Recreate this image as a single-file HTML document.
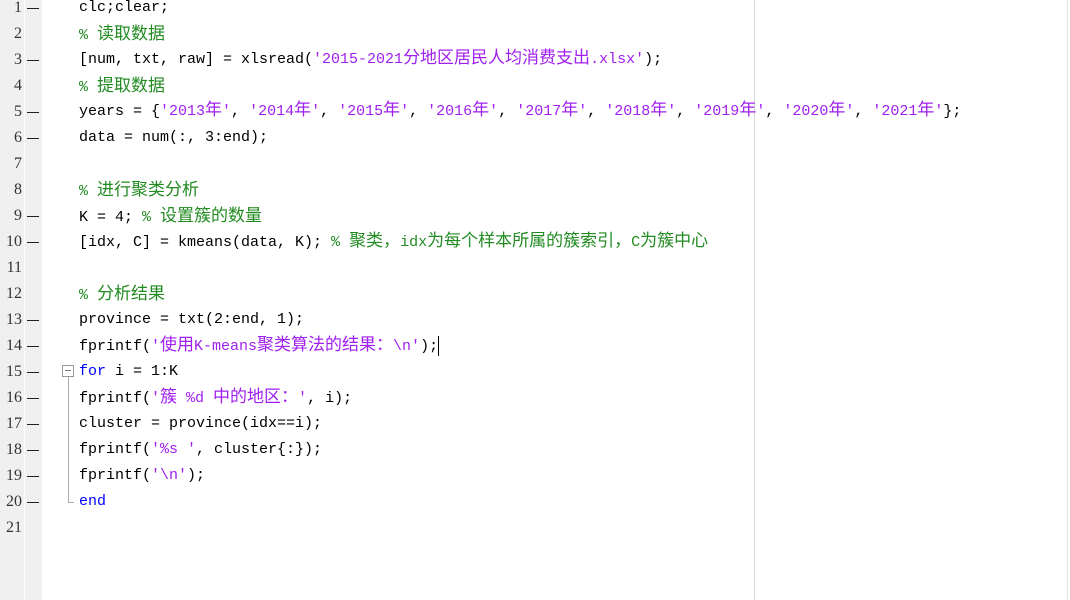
<!DOCTYPE html>
<html><head><meta charset="utf-8"><style>
html,body{margin:0;padding:0;width:1070px;height:600px;overflow:hidden;background:#fff;}
.g1{position:absolute;left:0;top:0;width:24px;height:600px;background:#f0f0f0;}
.g2{position:absolute;left:25px;top:0;width:17px;height:600px;background:#f0f0f0;}
.vl{position:absolute;left:754px;top:0;width:1px;height:600px;background:#d8d8d8;}
.rl{position:absolute;left:1067px;top:0;width:1px;height:600px;background:#e4e4e4;}
.n{position:absolute;left:0;width:22px;text-align:right;font:16px "Liberation Serif",serif;color:#333;height:26px;line-height:26px;}
.d{position:absolute;left:27px;width:12px;height:1px;background:#222;}
.l{position:absolute;left:79px;white-space:pre;font:15px "Liberation Mono","Noto Sans CJK SC",monospace;height:26px;line-height:26px;color:#000;}
.l span{line-height:0;}
.c{font-family:"Noto Sans CJK SC",sans-serif;font-size:17px;line-height:0;vertical-align:baseline;}
.gr{color:#228b22}.m{color:#a020f0}.b{color:#0000ff}
</style></head><body>
<div class="g1"></div><div class="g2"></div><div class="vl"></div><div class="rl"></div>
<div class="n" style="top:-5px">1</div><div class="d" style="top:8px"></div>
<div class="n" style="top:21px">2</div>
<div class="n" style="top:47px">3</div><div class="d" style="top:60px"></div>
<div class="n" style="top:73px">4</div>
<div class="n" style="top:99px">5</div><div class="d" style="top:112px"></div>
<div class="n" style="top:125px">6</div><div class="d" style="top:138px"></div>
<div class="n" style="top:151px">7</div>
<div class="n" style="top:177px">8</div>
<div class="n" style="top:203px">9</div><div class="d" style="top:216px"></div>
<div class="n" style="top:229px">10</div><div class="d" style="top:242px"></div>
<div class="n" style="top:255px">11</div>
<div class="n" style="top:281px">12</div>
<div class="n" style="top:307px">13</div><div class="d" style="top:320px"></div>
<div class="n" style="top:333px">14</div><div class="d" style="top:346px"></div>
<div class="n" style="top:359px">15</div><div class="d" style="top:372px"></div>
<div class="n" style="top:385px">16</div><div class="d" style="top:398px"></div>
<div class="n" style="top:411px">17</div><div class="d" style="top:424px"></div>
<div class="n" style="top:437px">18</div><div class="d" style="top:450px"></div>
<div class="n" style="top:463px">19</div><div class="d" style="top:476px"></div>
<div class="n" style="top:489px">20</div><div class="d" style="top:502px"></div>
<div class="n" style="top:515px">21</div>

<div class="l" style="top:-5px">clc;clear;</div>
<div class="l gr" style="top:23px">% <span class="c">读取数据</span></div>
<div class="l" style="top:47px">[num, txt, raw] = xlsread(<span class="m">'2015-2021<span class="c">分地区居民人均消费支出</span>.xlsx'</span>);</div>
<div class="l gr" style="top:75px">% <span class="c">提取数据</span></div>
<div class="l" style="top:99px">years = {<span class="m">'2013<span class="c">年</span>'</span>, <span class="m">'2014<span class="c">年</span>'</span>, <span class="m">'2015<span class="c">年</span>'</span>, <span class="m">'2016<span class="c">年</span>'</span>, <span class="m">'2017<span class="c">年</span>'</span>, <span class="m">'2018<span class="c">年</span>'</span>, <span class="m">'2019<span class="c">年</span>'</span>, <span class="m">'2020<span class="c">年</span>'</span>, <span class="m">'2021<span class="c">年</span>'</span>};</div>
<div class="l" style="top:125px">data = num(:, 3:end);</div>
<div class="l gr" style="top:179px">% <span class="c">进行聚类分析</span></div>
<div class="l" style="top:205px">K = 4; <span class="gr">% <span class="c">设置簇的数量</span></span></div>
<div class="l" style="top:230px">[idx, C] = kmeans(data, K); <span class="gr">% <span class="c">聚类，</span>idx<span class="c">为每个样本所属的簇索引，</span>C<span class="c">为簇中心</span></span></div>
<div class="l gr" style="top:283px">% <span class="c">分析结果</span></div>
<div class="l" style="top:307px">province = txt(2:end, 1);</div>
<div class="l" style="top:334px">fprintf(<span class="m">'<span class="c">使用</span>K-means<span class="c">聚类算法的结果：</span>\n'</span>);<span style="display:inline-block;width:1px;height:20px;background:#000;vertical-align:middle;line-height:20px"></span></div>
<div class="l" style="top:359px"><span class="b">for</span> i = 1:K</div>
<div class="l" style="top:386px">fprintf(<span class="m">'<span class="c">簇</span> %d <span class="c">中的地区：</span>'</span>, i);</div>
<div class="l" style="top:411px">cluster = province(idx==i);</div>
<div class="l" style="top:437px">fprintf(<span class="m">'%s '</span>, cluster{:});</div>
<div class="l" style="top:463px">fprintf(<span class="m">'\n'</span>);</div>
<div class="l b" style="top:489px">end</div>

<div style="position:absolute;left:62px;top:365px;width:10px;height:10px;border:1px solid #999;background:#fff"></div>
<div style="position:absolute;left:65px;top:370px;width:6px;height:1px;background:#777"></div>
<div style="position:absolute;left:68px;top:377px;width:1px;height:125px;background:#aaa"></div>
<div style="position:absolute;left:68px;top:502px;width:6px;height:1px;background:#aaa"></div>
</body></html>
